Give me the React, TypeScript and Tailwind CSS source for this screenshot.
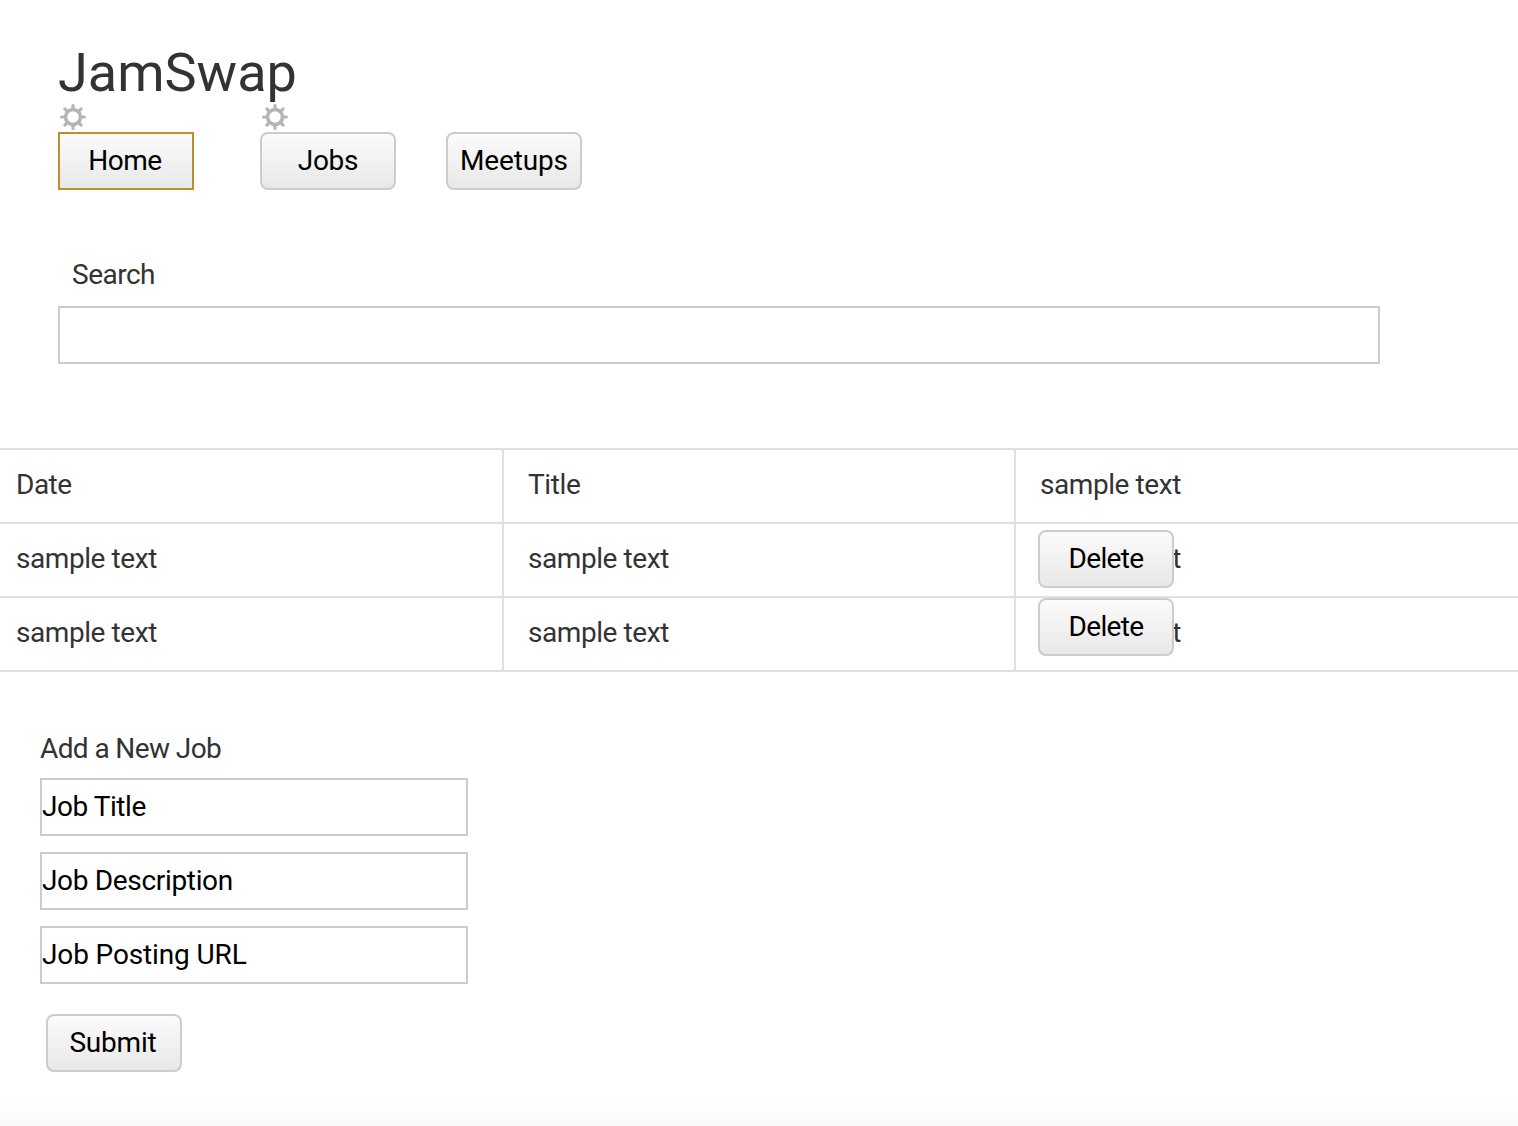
import React from 'react';

const Gear = () => (
  <svg width="28" height="28" viewBox="0 0 28 28" className="block ml-px -mt-px mb-px" fill="none" stroke="#b4b4b4">
    <circle cx="14" cy="14" r="7.5" strokeWidth="3.5" />
    <g strokeWidth="3.2" strokeLinecap="round">
      <path d="M14 2.6v3.5M14 21.9v3.5M2.6 14h3.5M21.9 14h3.5M5.9 5.9l2.4 2.4M19.7 19.7l2.4 2.4M5.9 22.1l2.4-2.4M19.7 8.3l2.4-2.4" />
    </g>
  </svg>
);

const btn =
  'w-[136px] h-[58px] border-2 bg-gradient-to-b from-[#fbfbfb] to-[#e8e8e8] text-black text-[28px] flex items-center justify-center';
const btnGrey = 'rounded-[8px] border-[#cccccc]';

const Row = ({ cells, track, head, del }: { cells: string[]; track: string[]; head?: boolean; del?: string }) => (
  <div className={`grid grid-cols-[504px_512px_1fr] border-b-2 border-[#e0e0e0] text-[#333333] text-[28px] ${head ? 'border-t-2 h-[76px]' : 'h-[74px]'}`}>
    <div className={`border-r-2 border-[#e0e0e0] pl-[16px] pb-[2px] flex items-center ${track[0]}`}>{cells[0]}</div>
    <div className={`border-r-2 border-[#e0e0e0] pl-[24px] pb-[2px] flex items-center ${track[1]}`}>{cells[1]}</div>
    <div className={`relative pl-[24px] pb-[2px] flex items-center ${track[2]}`}>
      {cells[2]}
      {del && <button className={`${btn} ${btnGrey} tracking-[-0.65px] absolute left-[22px] ${del}`}>Delete</button>}
    </div>
  </div>
);

const Field = ({ label, track }: { label: string; track: string }) => (
  <div className={`w-[428px] h-[58px] border-2 border-[#cccccc] bg-white text-black text-[28px] flex items-center ${track}`}>{label}</div>
);

const sampleTrack = 'tracking-[-0.43px]';

export default function App() {
  return (
    <div className="h-[1126px] overflow-hidden bg-white font-['Roboto',sans-serif] relative">
      <div className="pl-[58px] pt-[41px]">
        <h1 className="text-[54px] leading-[63px] text-[#333333]">JamSwap</h1>
        <div className="flex">
          <div className="w-[136px]">
            <Gear />
            <div className={`${btn} border-[#bd8d2e] tracking-[-0.5px] pr-[2px]`}>Home</div>
          </div>
          <div className="w-[136px] ml-[66px]">
            <Gear />
            <div className={`${btn} ${btnGrey} tracking-[-0.25px]`}>Jobs</div>
          </div>
          <div className="w-[136px] ml-[50px] pt-[28px]">
            <div className={`${btn} ${btnGrey} tracking-[-0.15px]`}>Meetups</div>
          </div>
        </div>
        <div className="pl-[14px] mt-[68px] h-[34px] text-[28px] leading-[34px] text-[#333333] tracking-[-0.5px]">Search</div>
        <div className="w-[1322px] h-[58px] mt-[14px] border-2 border-[#cccccc]" />
      </div>

      <div className="mt-[84px]">
        <Row head cells={['Date', 'Title', 'sample text']} track={['tracking-[-0.5px]', 'tracking-[-0.4px]', sampleTrack]} />
        <Row cells={['sample text', 'sample text', 'sample text']} track={[sampleTrack, sampleTrack, sampleTrack]} del="top-[6px]" />
        <Row cells={['sample text', 'sample text', 'sample text']} track={[sampleTrack, sampleTrack, sampleTrack]} del="top-0" />
      </div>

      <div className="pl-[40px] pt-[60px]">
        <div className="text-[28px] leading-[34px] text-[#333333] mb-[12px] tracking-[-0.6px]">Add a New Job</div>
        <div className="flex flex-col gap-[16px]">
          <Field label="Job Title" track="tracking-[-0.45px]" />
          <Field label="Job Description" track="tracking-[-0.33px]" />
          <Field label="Job Posting URL" track="tracking-[-0.13px]" />
        </div>
        <button className={`${btn} ${btnGrey} ml-[6px] mt-[30px] tracking-[-0.2px] pr-[2px]`}>Submit</button>
      </div>

      <div className="absolute bottom-0 left-0 right-0 h-[30px] bg-gradient-to-b from-white to-[#fafafa]" />
    </div>
  );
}
